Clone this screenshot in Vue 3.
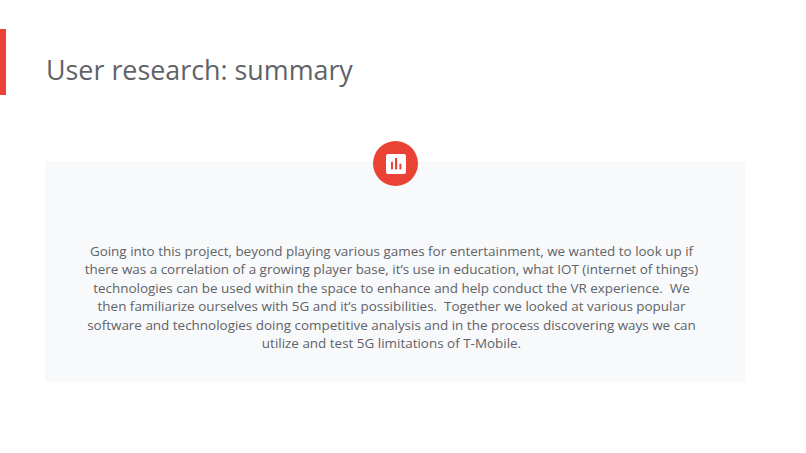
<script setup>
const lines = [
  'Going into this project, beyond playing various games for entertainment, we wanted to look up if',
  'there was a correlation of a growing player base, it’s use in education, what IOT (internet of things)',
  'technologies can be used within the space to enhance and help conduct the VR experience.\u00a0 We',
  'then familiarize ourselves with 5G and it’s possibilities.\u00a0 Together we looked at various popular',
  'software and technologies doing competitive analysis and in the process discovering ways we can',
  'utilize and test 5G limitations of T-Mobile.',
]
</script>

<template>
  <main class="slide">
    <header class="head">
      <h1 class="title">User research: summary</h1>
    </header>
    <section class="panel">
      <div class="badge">
        <svg width="20" height="20" viewBox="0 0 20 20" aria-hidden="true">
          <rect x="0" y="0" width="20" height="20" rx="2" fill="#fff" />
          <rect x="5" y="7.8" width="2" height="7.6" fill="#ea4335" />
          <rect x="9" y="4" width="2.2" height="11.4" fill="#ea4335" />
          <rect x="13.4" y="9.7" width="2" height="5.7" fill="#ea4335" />
        </svg>
      </div>
      <p class="body">
        <span v-for="l in lines" :key="l" class="line">{{ l }}</span>
      </p>
    </section>
  </main>
</template>

<style scoped>
.slide {
  width: 806px;
  height: 453px;
  box-sizing: border-box;
  padding-top: 29px;
  background: #fff;
  overflow: hidden;
  font-family: "Open Sans", sans-serif;
}
.head {
  height: 66px;
  box-sizing: border-box;
  border-left: 6px solid #ea4335;
  padding-left: 40px;
  padding-top: 16px;
  display: flex;
  align-items: center;
}
.title {
  margin: 0;
  font-size: 26.85px;
  font-weight: 400;
  color: #5f6368;
  line-height: 1.2;
}
.panel {
  position: relative;
  margin: 66px 0 0 45px;
  width: 700px;
  height: 221px;
  box-sizing: border-box;
  padding: 81px 7px 0 0;
  background: #f8f9fa;
}
.badge {
  position: absolute;
  left: 328px;
  top: -20px;
  width: 45px;
  height: 45px;
  border-radius: 50%;
  background: #ea4335;
  display: flex;
  align-items: center;
  justify-content: center;
}
.body {
  margin: 0;
  font-size: 13.45px;
  line-height: 18.4px;
  color: #5f6368;
  text-align: center;
}
.line {
  display: block;
  white-space: nowrap;
}
</style>

<style>
html, body { margin: 0; background: #fff; }
</style>
